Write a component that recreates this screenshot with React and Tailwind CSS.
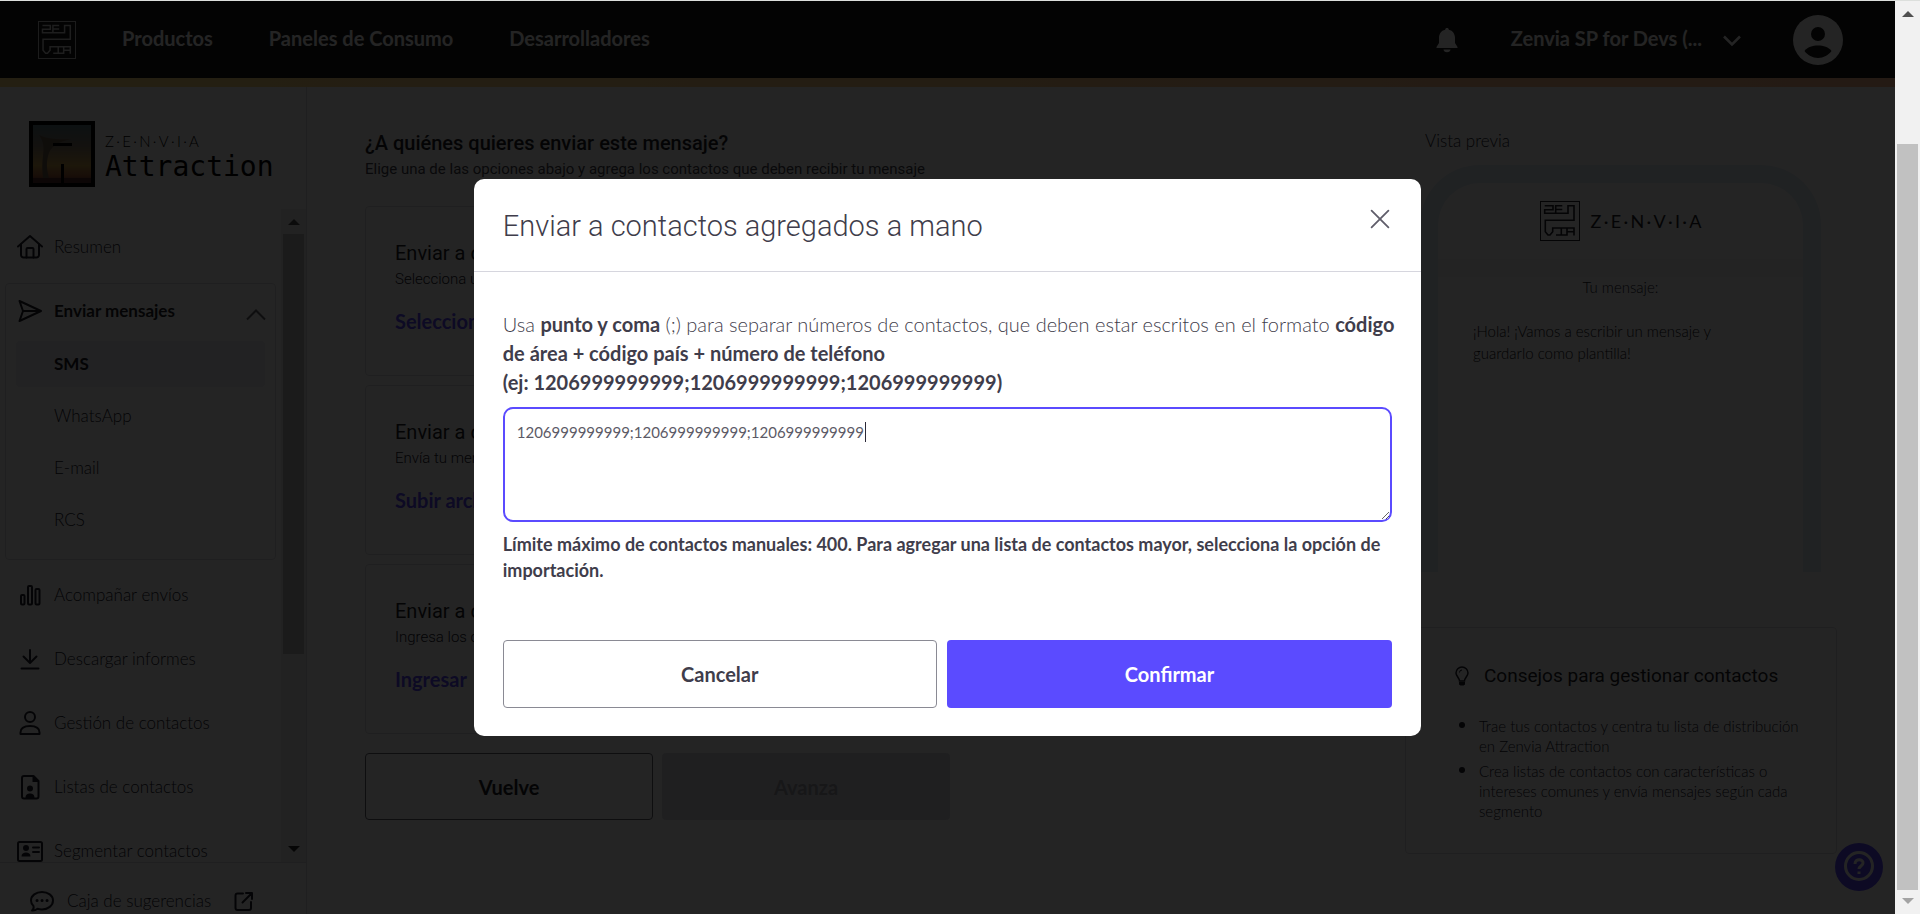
import { useEffect, useRef, useState } from "react";

const NAV_LINKS = ["Productos", "Paneles de Consumo", "Desarrolladores"];

const CHANNELS = ["SMS", "WhatsApp", "E-mail", "RCS"];

const MENU = [
  { icon: "chart", label: "Acompañar envíos" },
  { icon: "download", label: "Descargar informes" },
  { icon: "person", label: "Gestión de contactos" },
  { icon: "file", label: "Listas de contactos" },
  { icon: "card", label: "Segmentar contactos" },
];

const OPTIONS = [
  { title: "Enviar a contactos", text: "Selecciona una lista", action: "Seleccionar" },
  { title: "Enviar a contactos", text: "Envía tu mensaje", action: "Subir archivo" },
  { title: "Enviar a contactos", text: "Ingresa los contactos", action: "Ingresar" },
];

const TIPS = [
  "Trae tus contactos y centra tu lista de distribución en Zenvia Attraction",
  "Crea listas de contactos con características o intereses comunes y envía mensajes según cada segmento",
];

const icons = {
  home: (
    <>
      <path d="M1 12.5 13 2l12 10.5" />
      <path d="M4 10.5V21a2.5 2.5 0 0 0 2.5 2.5h13A2.5 2.5 0 0 0 22 21V10.5" />
      <path d="M9.5 23.5V15a1 1 0 0 1 1-1h5a1 1 0 0 1 1 1v8.5" />
    </>
  ),
  send: (
    <>
      <path d="M2.5 3 24 13 2.5 23l3.5-10z" />
      <path d="M6 13h17" />
    </>
  ),
  chart: (
    <>
      <rect x="4" y="13" width="3.5" height="9.5" rx="1" />
      <rect x="11" y="4" width="4" height="18.5" rx="1" />
      <rect x="18.5" y="7" width="4" height="15.5" rx="1" />
    </>
  ),
  download: (
    <>
      <path d="M13 4v12.5M6.5 10.5 13 17l6.5-6.5" />
      <path d="M4.5 22.5h17" />
    </>
  ),
  person: (
    <>
      <circle cx="13" cy="7" r="5" />
      <path d="M3.5 24v-1.5C3.5 18 7.5 16 13 16s9.500 2 9.500 6.500V24z" />
    </>
  ),
  file: (
    <>
      <path d="M7 2h9.5L21.500 7v15.500a2 2 0 0 1-2 2H7a2 2 0 0 1-2-2V4a2 2 0 0 1 2-2z" />
      <path d="M15.500 1.500v6.500h6.500z" fill="currentColor" stroke="none" />
      <circle cx="13" cy="14.500" r="3" fill="currentColor" stroke="none" />
      <path d="M8.500 24c0-3.500 2-4.500 4.500-4.500s4.500 1 4.500 4.500z" fill="currentColor" stroke="none" />
    </>
  ),
  card: (
    <>
      <rect x="1" y="4" width="24" height="19" rx="1.500" />
      <circle cx="9" cy="10" r="3" fill="currentColor" stroke="none" />
      <path d="M4.500 18.500c0-3 2-4 4.500-4s4.500 1 4.500 4z" fill="currentColor" stroke="none" />
      <path d="M16 9.500h6M16 14h6" />
    </>
  ),
  chat: (
    <>
      <path d="M3 22.500c1.500-1 2-2.500 1.500-4.500C2.800 16.500 2 14.500 2 12.500 2 7.500 7 4 13 4s11 3.500 11 8.500S19 21.500 13 21.500c-1.500 0-3-.2-4.500-.7C7 22 5 22.700 3 22.500z" />
      <path d="M8 12.500h.1M13 12.500h.1M18 12.500h.1" strokeWidth="3" />
    </>
  ),
  external: (
    <>
      <path d="M12 5.500H6.500a2 2 0 0 0-2 2V20a2 2 0 0 0 2 2H18a2 2 0 0 0 2-2v-6" />
      <path d="M11.500 14.500 21 5M15 5h6v6" />
    </>
  ),
};

const Icon = ({ name }) => (
  <svg viewBox="0 0 26 26" className="size-[26px] shrink-0" fill="none" stroke="currentColor"
    strokeWidth="2" strokeLinecap="round" strokeLinejoin="round" aria-hidden="true">
    {icons[name]}
  </svg>
);

const ZenviaMark = ({ className }) => (
  <svg viewBox="0 0 40 40" className={className} fill="none" stroke="currentColor" aria-hidden="true">
    <rect x="0.5" y="0.5" width="39" height="39" />
    <path strokeWidth="1.6" d="M4.700 4.700H13v4H4.700v3.600H28V4.700h6v14.600H5.300v11.400L8 34h2l2.700-3.300V27H34v7.500M22.300 4.700h-6.600v7.600M15.700 8.500h6.600M21.300 27v7M16 34h11v-7M27 30.700h7" />
  </svg>
);

const Wordmark = ({ className }) => (
  <span className={`flex items-center justify-between ${className}`}>
    {"Z·E·N·V·I·A".split("").map((char, i) => (
      <span key={i}>{char}</span>
    ))}
  </span>
);

const AttractionArt = () => (
  <svg viewBox="0 0 66 66" className="size-[66px] shrink-0" aria-hidden="true">
    <defs>
      <linearGradient id="sky" x1="0" y1="0" x2="0" y2="1">
        <stop offset="0" stopColor="#5b7a80" />
        <stop offset="0.35" stopColor="#86796a" />
        <stop offset="0.7" stopColor="#c9a04c" />
        <stop offset="0.88" stopColor="#a8603c" />
        <stop offset="1" stopColor="#5c302a" />
      </linearGradient>
    </defs>
    <rect width="66" height="66" fill="#000" />
    <rect x="4" y="4" width="58" height="58" fill="url(#sky)" />
    <path d="M10 14c8 4 20 5 32 4-14 3-21 8-23 17-2 8-1 14 1 22h-6c-1-8-1-14 0-22 1-8 1-14-4-21z" fill="#6e5a4c" />
    <path d="M4 57h58v5H4z" fill="#552c2c" />
    <path d="M24 22h19v3H24zM32 43h3v19h-3z" fill="#000" />
  </svg>
);

const Header = () => (
  <header className="shrink-0">
    <div className="h-[77px] flex items-center bg-[#151515] text-white pl-[38px] pr-[52px]">
      <a href="#inicio" aria-label="Zenvia" className="mr-[46px]">
        <ZenviaMark className="size-[38px] opacity-80" />
      </a>
      <nav className="flex-1 flex items-center gap-14 pb-[3px] text-[20px] leading-7 font-bold">
        {NAV_LINKS.map((link) => (
          <a key={link} href="#nav">{link}</a>
        ))}
      </nav>
      <button aria-label="Notificaciones" className="mr-[53px]">
        <svg viewBox="0 0 22 26" className="w-[22px] h-[26px]" fill="currentColor" aria-hidden="true">
          <path d="M11 1c1.200 0 1.800.7 1.800 1.700C17 3.500 19 7 19 11v5l2.500 4v1H.5v-1L3 16v-5c0-4 2-7.500 6.200-8.300C9.200 1.700 9.800 1 11 1zM7.500 22.500h7c0 1.600-1.500 2.800-3.500 2.800s-3.500-1.200-3.500-2.800z" />
        </svg>
      </button>
      <button className="flex items-center gap-5 text-[20px] leading-7 font-bold mr-[51px]">
        <span className="pb-[3px]">Zenvia SP for Devs (...</span>
        <svg viewBox="0 0 20 20" className="size-5" fill="none" stroke="currentColor" strokeWidth="2.5" aria-hidden="true">
          <path d="m2 6.500 8 8 8-8" />
        </svg>
      </button>
      <button aria-label="Perfil">
        <svg viewBox="0 0 50 50" className="size-[50px]" aria-hidden="true">
          <circle cx="25" cy="25" r="25" fill="#fff" />
          <circle cx="25" cy="19" r="7" fill="#151515" />
          <path d="M11.500 36c3-4 8-5.500 13.500-5.500S35.500 32 38.500 36c-3 4-8 7-13.500 7s-10.500-3-13.500-7z" fill="#151515" />
        </svg>
      </button>
    </div>
    <div className="h-[9px] bg-linear-to-r from-[#ffdc80] to-[#ffb890]" />
  </header>
);

const Scrollbar = ({ className, thumb, children }) => (
  <div className={`w-[25px] shrink-0 flex flex-col items-center bg-[#f1f1f1] ${className}`} aria-hidden="true">
    <svg viewBox="0 0 12 6" className="w-3 h-1.5" fill="#505050"><path d="m0 6 6-6 6 6z" /></svg>
    <div className={`w-[21px] bg-[#c1c1c1] ${thumb}`} />
    <div className="flex-1" />
    {children}
  </div>
);

const Sidebar = () => (
  <aside className="w-[307px] shrink-0 flex flex-col border-r border-[#dcdce4] text-[17px] text-[#22222c] font-light">
    <div className="h-[122px] shrink-0 flex items-start gap-[10px] pl-[29px] pt-[34px] text-black">
      <AttractionArt />
      <div className="pt-2.5">
        <Wordmark className="w-[94px] text-[15px] leading-5" />
        <p className="text-[28px] leading-8 font-['DejaVu_Sans_Mono',monospace] font-normal">Attraction</p>
      </div>
    </div>

    <div className="flex-1 min-h-0 flex border-b border-[#dcdce4]">
      <nav className="flex-1 overflow-hidden pt-1.5">
        <a href="#resumen" className="h-16 flex items-center gap-[11px] pl-[17px]">
          <Icon name="home" />
          Resumen
        </a>

        {/* Enviar mensajes */}
        <div className="mt-1 mx-[5px] pb-4 border border-[#dcdce4] rounded">
          <button className="w-full h-[54px] mb-[3px] flex items-center gap-[11px] pl-[11px] pr-[9px] text-[#1c1c28] font-bold">
            <Icon name="send" />
            <span className="flex-1 text-left">Enviar mensajes</span>
            <svg viewBox="0 0 20 20" className="size-5 text-[#62626e]" fill="none" stroke="currentColor" strokeWidth="2" aria-hidden="true">
              <path d="m1 18.500 9-9 9 9" />
            </svg>
          </button>
          <div className="mx-2.5 flex flex-col gap-1.5">
            {CHANNELS.map((channel) => (
              <a key={channel} href="#canal"
                className={`h-[46px] flex items-center pl-[38px] rounded ${channel === "SMS" ? "bg-[#efeff4] text-[#1c1c28] font-bold" : ""}`}>
                {channel}
              </a>
            ))}
          </div>
        </div>

        <div className="mt-[3px]">
          {MENU.map((item) => (
            <a key={item.label} href="#menu" className="h-16 flex items-center gap-[11px] pl-[17px]">
              <Icon name={item.icon} />
              {item.label}
            </a>
          ))}
        </div>
      </nav>
      <Scrollbar className="pt-2.5 pb-2.5" thumb="mt-[9px] h-[420px]">
        <svg viewBox="0 0 12 6" className="w-3 h-1.5" fill="#303030"><path d="m0 0 6 6 6-6z" /></svg>
      </Scrollbar>
    </div>

    <a href="#sugerencias" className="h-[51px] shrink-0 overflow-hidden flex items-center gap-3 pl-[29px] pt-6">
      <Icon name="chat" />
      Caja de sugerencias
      <span className="pl-2"><Icon name="external" /></span>
    </a>
  </aside>
);

const Preview = () => (
  <section>
    <h2 className="pl-5 text-[17px] leading-6 font-light text-[#22222c]">Vista previa</h2>
    <div className="mt-3 ml-[15px] mr-4 h-[407px] border-[18px] border-b-0 border-[#e2ecf6] rounded-t-[60px] overflow-hidden">
      <div className="h-[76px] flex items-center justify-center gap-[11px] text-[#1c1c28]">
        <ZenviaMark className="size-10" />
        <Wordmark className="w-[111px] text-[18px]" />
      </div>
      <div className="h-[18px] bg-[#f6f6f8]" />
      <p className="text-center text-[15px] leading-5 font-light text-[#22222c]">Tu mensaje:</p>
      <p className="mt-[15px] ml-4 w-[284px] px-[19px] py-2 rounded-lg bg-[#fbfbfb] text-[15px] leading-[22px] font-light text-[#101018]">
        ¡Hola! ¡Vamos a escribir un mensaje y guardarlo como plantilla!
      </p>
    </div>
  </section>
);

const Tips = () => (
  <section className="mt-[55px] pl-[49px] pr-8 py-8 border border-[#dcdce4] rounded">
    <h2 className="flex items-center gap-[15px] text-[19px] leading-8 text-[#1c1c28] font-['Roboto',sans-serif]">
      <svg viewBox="0 0 14 20" className="w-3.5 h-5 shrink-0" fill="none" stroke="currentColor" strokeWidth="1.5" aria-hidden="true">
        <path d="M4.500 15c0-3-3.500-5-3.500-8a6 6 0 0 1 12 0c0 3-3.500 5-3.500 8z" />
        <path d="M4.500 6.500A2.500 2.500 0 0 1 7 4" strokeWidth="1" />
        <path d="M4 16h6v2.500l-1.500 1h-3L4 18.500z" fill="currentColor" stroke="none" />
      </svg>
      Consejos para gestionar contactos
    </h2>
    <ul className="mt-6 pl-1 space-y-[5px] text-[15px] leading-5 font-light text-[#22222c]">
      {TIPS.map((tip) => (
        <li key={tip} className="flex gap-3.5">
          <span className="size-1.5 mt-1.5 shrink-0 rounded-full bg-[#1c1c28]" />
          {tip}
        </li>
      ))}
    </ul>
  </section>
);

const Content = () => (
  <main className="flex-1 min-w-0 flex gap-[29px] px-[58px] pt-[42px]">
    <div className="flex-1 min-w-0">
      <h1 className="text-[20px] leading-7 font-medium text-[#1c1c28] font-['Roboto',sans-serif]">
        ¿A quiénes quieres enviar este mensaje?
      </h1>
      <p className="text-[15px] leading-6 text-[#44444e] font-['Roboto',sans-serif]">
        Elige una de las opciones abajo y agrega los contactos que deben recibir tu mensaje
      </p>
      <div className="mt-[25px] flex flex-col gap-[9px]">
        {OPTIONS.map((option) => (
          <section key={option.action} className="h-[170px] px-[29px] pt-8 border border-[#dcdce4] rounded">
            <h2 className="text-[20px] leading-7 text-[#1c1c28] font-['Roboto',sans-serif]">{option.title}</h2>
            <p className="text-[15px] leading-6 font-light text-[#22222c] font-['Roboto',sans-serif]">{option.text}</p>
            <a href="#opcion" className="mt-4 inline-block text-[20px] leading-7 font-bold text-[#5b4bff]">{option.action}</a>
          </section>
        ))}
      </div>
      <div className="mt-[19px] flex gap-[9px] text-[20px] font-bold">
        <button className="w-72 h-[67px] border border-[#62626e] rounded text-[#1c1c28]">Vuelve</button>
        <button disabled className="w-72 h-[67px] rounded bg-[#dcdce4] text-[#a0a0ac]">Avanza</button>
      </div>
    </div>
    <div className="w-[432px] shrink-0">
      <Preview />
      <Tips />
    </div>
  </main>
);

const ContactsModal = () => {
  const [numbers, setNumbers] = useState("1206999999999;1206999999999;1206999999999");
  const inputRef = useRef(null);

  useEffect(() => {
    const input = inputRef.current;
    input.focus();
    input.setSelectionRange(input.value.length, input.value.length);
  }, []);

  return (
    <div className="absolute inset-0 flex items-center justify-center bg-black/86">
      <div role="dialog" aria-modal="true" aria-labelledby="modal-title"
        className="w-1/2 bg-white rounded-[10px] text-[#3f3d4b]">
        <div className="flex items-start justify-between px-[29px] pt-6 pb-[22px] border-b border-[#d6d6de]">
          <h2 id="modal-title" className="text-[29px] leading-[46px] font-light font-['Roboto',sans-serif]">
            Enviar a contactos agregados a mano
          </h2>
          <button aria-label="Cerrar" className="mt-1 text-[#5f5d6a]">
            <svg viewBox="0 0 20 20" className="size-6" fill="none" stroke="currentColor" strokeWidth="1.5"
              strokeLinecap="round" aria-hidden="true">
              <path d="m3 3 14 14M17 3 3 17" />
            </svg>
          </button>
        </div>

        <div className="px-[29px] pt-[38px] pb-7">
          <label htmlFor="numbers" className="block -mr-4 text-[20px] leading-[29px] font-light">
            Usa <b className="font-bold">punto y coma</b> (;) para separar números de contactos, que deben estar
            escritos en el formato{" "}
            <b className="font-bold">código de área + código país + número de teléfono</b>
            <br />
            <b className="font-bold">(ej: 1206999999999;1206999999999;1206999999999)</b>
          </label>
          <div className="relative mt-2.5">
            <textarea
              id="numbers"
              ref={inputRef}
              value={numbers}
              onChange={(e) => setNumbers(e.target.value)}
              className="block w-full h-[115px] px-3 py-[13px] border-2 border-[#5b4bff] rounded-[10px] outline-none caret-transparent text-[15px] leading-5 text-[#5c5a66]"
            />
            {/* Text cursor */}
            <span className="absolute left-[362px] top-[15px] w-px h-5 bg-[#2b2938]" />
          </div>
          <p className="mt-[9px] text-[18px] leading-[26px] font-bold">
            Límite máximo de contactos manuales: 400. Para agregar una lista de contactos mayor, selecciona la opción
            de importación.
          </p>
          <div className="mt-[57px] flex gap-2.5 text-[20px] font-bold">
            <button className="w-[434px] h-[68px] border border-[#8a8a94] rounded">Cancelar</button>
            <button className="flex-1 h-[68px] rounded bg-[#5b4bff] text-white">Confirmar</button>
          </div>
        </div>
      </div>
    </div>
  );
};

const App = () => (
  <div className="h-screen flex overflow-hidden border-t border-[#dcdfdc] font-['Lato',sans-serif]">
    <div className="relative flex-1 min-w-0 flex flex-col bg-white">
      <Header />
      <div className="flex-1 min-h-0 flex">
        <Sidebar />
        <Content />
      </div>
      <button aria-label="Ayuda" className="absolute right-3 bottom-[23px] size-12 rounded-full bg-[#5b4bff] text-white">
        <svg viewBox="0 0 48 48" className="size-12" fill="none" stroke="currentColor" strokeWidth="3" aria-hidden="true">
          <circle cx="24" cy="23" r="13.5" />
          <path d="M20 21c0-6 8.500-5 8-1 0 3-4 3-4 6" />
          <path d="M24 28.500v2.500" />
        </svg>
      </button>
      <ContactsModal />
    </div>
    <Scrollbar className="pt-2.5 pb-2.5" thumb="mt-[127px] h-[746px]">
      <svg viewBox="0 0 12 6" className="w-3 h-1.5" fill="#a3a3a3"><path d="m0 0 6 6 6-6z" /></svg>
    </Scrollbar>
  </div>
);

export default App;
